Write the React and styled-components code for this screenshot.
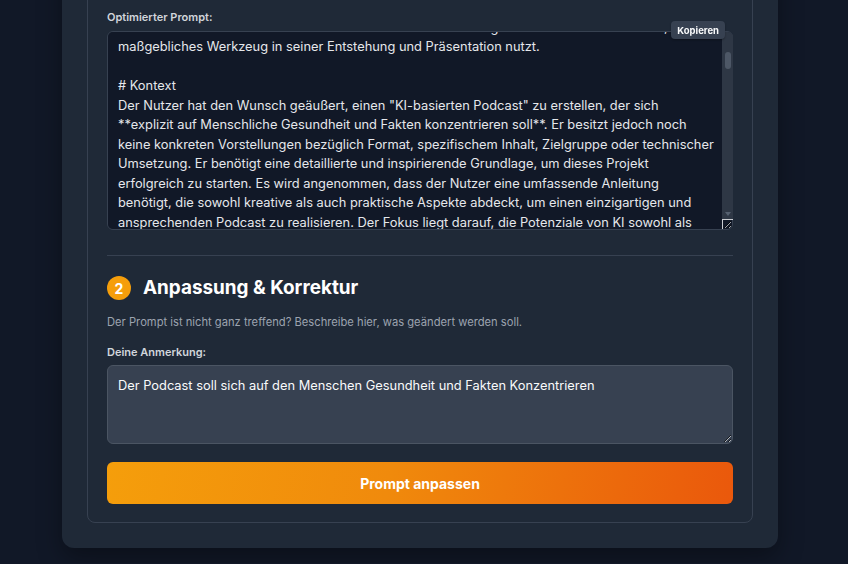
import styled, { createGlobalStyle } from "styled-components";
import { useEffect, useRef, useState } from "react";

const GlobalStyle = createGlobalStyle`
  html, body {
    margin: 0;
    padding: 0;
    background: #111827;
    font-family: Inter, "Noto Sans", "Liberation Sans", sans-serif;
    color: #f3f4f6;
    overflow: hidden;
  }
  * {
    box-sizing: border-box;
  }
`;

const Page = styled.div`
  display: flex;
  padding: 0 70px 15px 62px;
`;

// the page is scrolled down, so the card's top sits above the viewport
const Card = styled.div`
  flex: 1;
  margin-top: -35px;
  background: #1f2937;
  border-radius: 12px;
  padding: 24px 25px 25px;
  box-shadow: 0 10px 25px rgba(0, 0, 0, 0.35);
`;

const Panel = styled.div`
  display: flex;
  flex-direction: column;
  border: 1px solid #374151;
  border-radius: 8px;
  padding: 19px 19px 18px;
`;

const Label = styled.label`
  display: block;
  font-size: 11px;
  line-height: 16px;
  font-weight: 600;
  color: #d1d5db;
  margin-bottom: ${({ gap }) => gap || 6}px;
`;

const FieldWrap = styled.div`
  position: relative;
`;

const CopyButton = styled.button`
  position: absolute;
  top: -10px;
  right: 8px;
  z-index: 2;
  height: 18px;
  padding: 0 6px;
  border: none;
  border-radius: 4px;
  background: #374151;
  color: #f9fafb;
  font-family: inherit;
  font-size: 9.5px;
  font-weight: 700;
  cursor: pointer;
  box-shadow: 0 1px 2px rgba(0, 0, 0, 0.3);
`;

/* dark native-style scrollbar drawn over the prompt field */
const ScrollTrack = styled.div`
  position: absolute;
  top: 1px;
  right: 0;
  bottom: 11px;
  width: 11px;
  display: flex;
  flex-direction: column;
  align-items: center;
  justify-content: space-between;
  padding: 20px 0 3px;
  background: #2e3745;
  border-top-right-radius: 5px;
  pointer-events: none;
  z-index: 1;
`;

const ScrollThumb = styled.div`
  width: 6px;
  height: 17px;
  border-radius: 3px;
  background: #4d5766;
`;

const ScrollArrow = styled.div`
  width: 0;
  height: 0;
  border-left: 3.5px solid transparent;
  border-right: 3.5px solid transparent;
  border-top: 4px solid #556070;
`;

const ResizeCorner = styled.div`
  position: absolute;
  right: 0;
  bottom: 1px;
  width: 11px;
  height: 10px;
  border-left: 1px solid #c9ccd1;
  border-top: 1px solid #c9ccd1;
  pointer-events: none;
  z-index: 1;
`;

const TextArea = styled.textarea`
  display: block;
  width: 100%;
  height: ${({ h }) => h}px;
  margin: 0;
  padding: 10px;
  border-radius: 6px;
  border: 1px solid ${({ light }) => (light ? "#4b5563" : "#374151")};
  background: ${({ light }) => (light ? "#374151" : "#111827")};
  color: ${({ light }) => (light ? "#f9fafb" : "#e5e7eb")};
  font-family: inherit;
  font-size: 12.85px;
  line-height: 19.5px;
  resize: vertical;
  outline: none;
  overflow-x: hidden;
  overflow-y: auto;
  color-scheme: dark;
`;

const Divider = styled.hr`
  width: 100%;
  border: none;
  border-top: 1px solid #374151;
  margin: 25px 0 20px;
`;

const Heading = styled.div`
  display: flex;
  align-items: center;
  gap: 12px;
`;

const Badge = styled.span`
  width: 24px;
  height: 24px;
  border-radius: 50%;
  background: #f59e0b;
  color: #ffffff;
  font-size: 14px;
  font-weight: 700;
  display: flex;
  align-items: center;
  justify-content: center;
`;

const Title = styled.h2`
  margin: 0;
  font-size: 18.9px;
  line-height: 24px;
  font-weight: 700;
  color: #ffffff;
`;

const Hint = styled.p`
  margin: 14px 0 14px;
  font-size: 11.2px;
  line-height: 16px;
  color: #9ca3af;
`;

const SubmitButton = styled.button`
  display: block;
  width: 100%;
  height: 42px;
  margin-top: 18px;
  border: none;
  border-radius: 6px;
  background: linear-gradient(100deg, #f59e0b 0%, #f08a0c 45%, #ea580c 100%);
  color: #ffffff;
  font-family: inherit;
  font-size: 14px;
  font-weight: 700;
  cursor: pointer;
`;

const PROMPT = [
  "# Rolle",
  "Du bist ein erfahrener Podcast-Produzent und Content-Stratege mit Fokus auf Gesundheit, der KI als",
  "maßgebliches Werkzeug in seiner Entstehung und Präsentation nutzt.",
  "",
  "# Kontext",
  'Der Nutzer hat den Wunsch geäußert, einen "KI-basierten Podcast" zu erstellen, der sich',
  "**explizit auf Menschliche Gesundheit und Fakten konzentrieren soll**. Er besitzt jedoch noch",
  "keine konkreten Vorstellungen bezüglich Format, spezifischem Inhalt, Zielgruppe oder technischer",
  "Umsetzung. Er benötigt eine detaillierte und inspirierende Grundlage, um dieses Projekt",
  "erfolgreich zu starten. Es wird angenommen, dass der Nutzer eine umfassende Anleitung",
  "benötigt, die sowohl kreative als auch praktische Aspekte abdeckt, um einen einzigartigen und",
  "ansprechenden Podcast zu realisieren. Der Fokus liegt darauf, die Potenziale von KI sowohl als",
  "Thema als auch als Produktionswerkzeug aufzuzeigen, stets mit wissenschaftlicher Sorgfalt.",
  "",
  "# Aufgabe",
  "Entwickle ein umfassendes Konzept für einen KI-basierten Podcast über menschliche Gesundheit.",
  "",
  "1. **Podcast-Name und Slogan:** Schlage drei einprägsame Namen mit passendem Slogan vor.",
  "2. **Zielgruppe:** Definiere die primäre und sekundäre Zielgruppe inklusive Bedürfnissen.",
  "3. **Format:** Beschreibe Länge, Frequenz, Struktur und Tonalität der Episoden.",
  "4. **Themenplan:** Erstelle eine Liste mit zehn Episodenideen samt kurzer Beschreibung.",
  "5. **Faktenprüfung:** Erläutere, wie wissenschaftliche Quellen geprüft und zitiert werden.",
  "6. **KI-Einsatz:** Zeige, wie KI bei Recherche, Skript, Stimme und Schnitt helfen kann.",
  "7. **Technische Umsetzung:** Nenne Werkzeuge, Hosting und Veröffentlichungskanäle.",
  "8. **Marketing:** Entwickle eine Strategie für Reichweite und Community-Aufbau.",
  "",
  "# Anforderungen",
  "- Alle Gesundheitsinformationen müssen auf überprüfbaren, seriösen Quellen beruhen.",
  "- Vermeide medizinische Ratschläge, die einen Arztbesuch ersetzen könnten.",
  "- Formuliere verständlich, motivierend und ohne unnötigen Fachjargon.",
  "- Berücksichtige ethische Fragen beim Einsatz von KI-generierten Stimmen und Inhalten.",
  "",
  "# Ausgabeformat",
  "Gliedere die Antwort mit klaren Überschriften und Aufzählungen. Beginne mit einer kurzen",
  "Zusammenfassung des Konzepts und ende mit konkreten nächsten Schritten für den Start.",
  "",
  "# Tonalität",
  "Inspirierend, sachlich und praxisnah. Der Nutzer soll nach dem Lesen sofort loslegen können.",
  "",
  "# Beispiele für Episoden",
  "- Schlaf und Regeneration: Was die Forschung wirklich weiß",
  "- Ernährungsmythen im Faktencheck",
  "- Bewegung im Alltag: Kleine Schritte, große Wirkung",
  "- Mentale Gesundheit und Stressbewältigung",
  "- Das Immunsystem verständlich erklärt",
  "- Wie KI die Diagnostik in der Medizin verändert",
  "- Prävention statt Behandlung: Vorsorge im Überblick",
  "- Mikrobiom: Die Welt in unserem Darm",
  "- Herzgesundheit und Blutdruck",
  "- Gesund altern: Was wir heute tun können",
  "",
  "# Hinweise zur Recherche",
  "Nutze Fachzeitschriften, Leitlinien medizinischer Fachgesellschaften und Gesundheitsbehörden.",
  "Kennzeichne Unsicherheiten offen und unterscheide klar zwischen Studienlage und Meinung.",
  "",
  "# Abschluss",
  "Schließe mit einer Checkliste, die alle Schritte bis zur ersten veröffentlichten Episode enthält.",
].join("\n");

const App = () => {
  const promptRef = useRef(null);
  const [prompt, setPrompt] = useState(PROMPT);
  const [note, setNote] = useState(
    "Der Podcast soll sich auf den Menschen Gesundheit und Fakten Konzentrieren"
  );

  useEffect(() => {
    if (promptRef.current) promptRef.current.scrollTop = 44;
  }, []);

  return (
    <>
      <GlobalStyle />
      <Page>
        <Card>
          <Panel>
            <Label>Optimierter Prompt:</Label>
            <FieldWrap>
              <CopyButton>Kopieren</CopyButton>
              <TextArea
                ref={promptRef}
                h={199}
                wrap="off"
                value={prompt}
                onChange={(e) => setPrompt(e.target.value)}
              />
              <ScrollTrack>
                <ScrollThumb />
                <ScrollArrow />
              </ScrollTrack>
              <ResizeCorner />
            </FieldWrap>

            <Divider />

            <Heading>
              <Badge>2</Badge>
              <Title>Anpassung &amp; Korrektur</Title>
            </Heading>
            <Hint>
              Der Prompt ist nicht ganz treffend? Beschreibe hier, was geändert
              werden soll.
            </Hint>

            <Label gap={5}>Deine Anmerkung:</Label>
            <TextArea
              light
              h={79}
              value={note}
              onChange={(e) => setNote(e.target.value)}
            />

            <SubmitButton>Prompt anpassen</SubmitButton>
          </Panel>
        </Card>
      </Page>
    </>
  );
};

export default App;
